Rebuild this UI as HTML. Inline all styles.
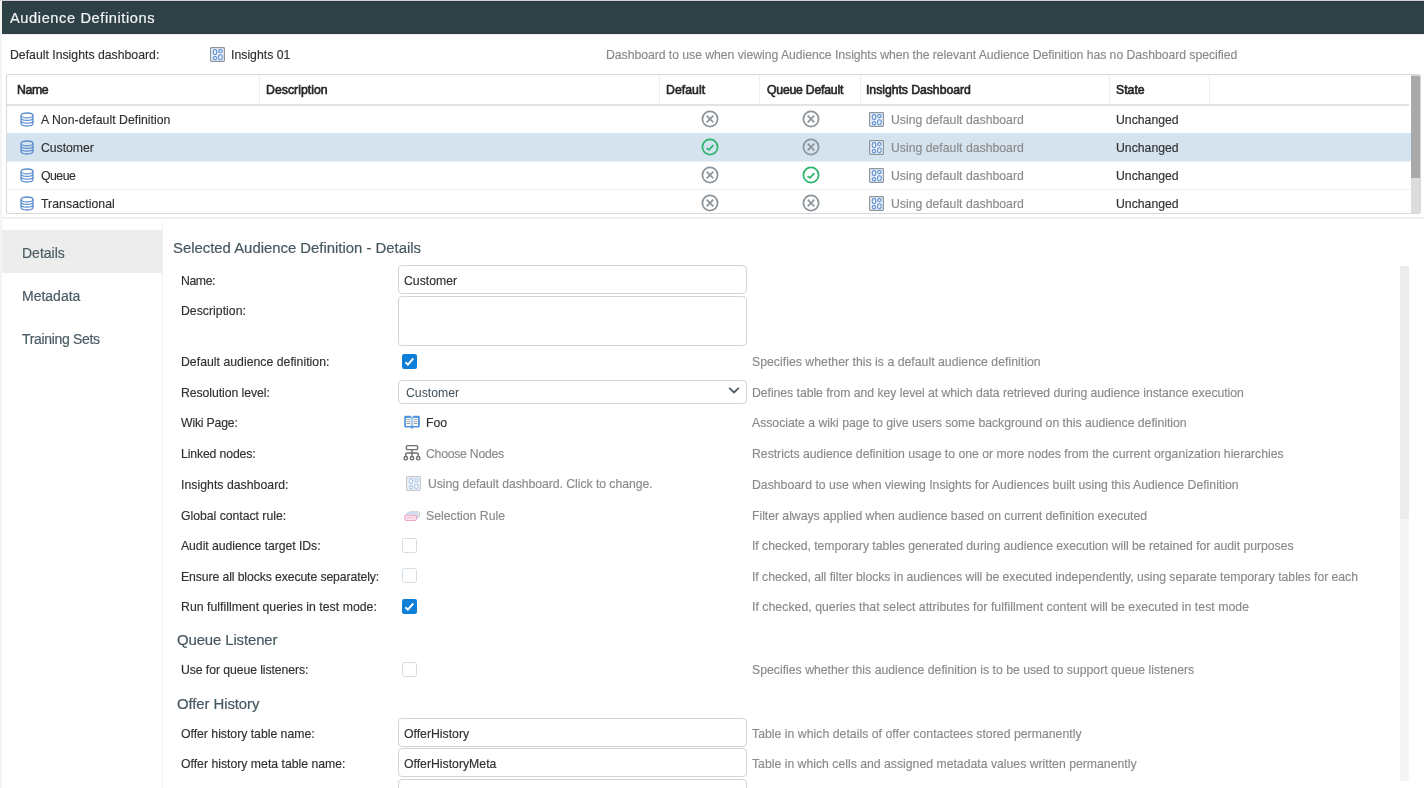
<!DOCTYPE html>
<html><head><meta charset="utf-8">
<style>
*{box-sizing:border-box;margin:0;padding:0}
html,body{width:1424px;height:788px;overflow:hidden;background:#f4f4f4;font-family:"Liberation Sans",sans-serif;font-size:12.25px;line-height:14px;color:#333}
.a{position:absolute;white-space:nowrap}
body>div.a:not([style*="background"]){will-change:transform}
.b{color:#262626;-webkit-text-stroke:0.6px #262626}
.g{color:#8a8a8a;-webkit-text-stroke:0.15px #8a8a8a}
.k{color:#303030;-webkit-text-stroke:0.15px #303030}
.nav{color:#4a5b63;font-size:14px;line-height:16px;-webkit-text-stroke:0.2px #4a5b63}
.ttl{color:#46585f;font-size:14.9px;line-height:17px;-webkit-text-stroke:0.2px #46585f}
.inp{position:absolute;left:398px;width:349px;border:1px solid #d4d4d4;border-radius:4px;background:#fff}
.cb{position:absolute;left:402px;width:15px;height:15px;border:1px solid #d3dde6;border-radius:2.5px;background:#fff}
</style></head><body>
<div class="a" style="left:2px;top:1px;width:1422px;height:787px;background:#fff"></div>
<div class="a" style="left:0;top:0;width:1424px;height:1px;background:#cfd3d5"></div>
<div class="a" style="left:2px;top:1px;width:1422px;height:33px;background:#2e4147;border-top:1px solid #2a3c42;border-bottom:1px solid #2a3c42"></div>
<div class="a" style="left:2px;top:34px;width:1422px;height:1px;background:#eef0f1"></div>
<div id="t1" class="a " style="left:10px;top:10px;letter-spacing:0.608px;color:#f2f4f5;font-size:14.6px;line-height:17px;-webkit-text-stroke:0.2px #f2f4f5">Audience Definitions</div>
<div id="t2" class="a k" style="left:10px;top:48px;letter-spacing:0.006px;">Default Insights dashboard:</div>
<svg class="a" style="left:210px;top:47px;" width="15" height="15" viewBox="0 0 15 15"><rect x="0.6" y="0.6" width="13.8" height="13.8" rx="0.8" fill="#eef3fa" stroke="#8c959c" stroke-width="1.2"/><g fill="none" stroke="#6a98d4" stroke-width="1.25"><rect x="3.3" y="2.5" width="3.4" height="5" rx="1.4"/><rect x="8.6" y="2.5" width="3.6" height="3" rx="1.4"/><rect x="3.3" y="9.6" width="3.4" height="2.9" rx="1.3"/><rect x="8.6" y="7.8" width="3.6" height="4.7" rx="1.4"/></g></svg>
<div id="t3" class="a k" style="left:231px;top:48px;letter-spacing:0.015px;">Insights 01</div>
<div id="t4" class="a g" style="left:606px;top:48px;letter-spacing:-0.049px;">Dashboard to use when viewing Audience Insights when the relevant Audience Definition has no Dashboard specified</div>
<div class="a" style="left:6px;top:74px;width:1415px;height:140px;border:1px solid #d9d9d9;border-radius:2px;background:#fff"></div>
<div class="a" style="left:259px;top:75px;width:1px;height:29px;background:#eeeeee"></div>
<div class="a" style="left:659px;top:75px;width:1px;height:29px;background:#eeeeee"></div>
<div class="a" style="left:759px;top:75px;width:1px;height:29px;background:#eeeeee"></div>
<div class="a" style="left:860px;top:75px;width:1px;height:29px;background:#eeeeee"></div>
<div class="a" style="left:1109px;top:75px;width:1px;height:29px;background:#eeeeee"></div>
<div class="a" style="left:1209px;top:75px;width:1px;height:29px;background:#eeeeee"></div>
<div class="a" style="left:7px;top:104px;width:1402px;height:2px;background:#e3e3e3"></div>
<div id="t5" class="a b" style="left:17px;top:83px;letter-spacing:-0.362px;">Name</div>
<div id="t6" class="a b" style="left:266px;top:83px;letter-spacing:0.032px;">Description</div>
<div id="t7" class="a b" style="left:666px;top:83px;letter-spacing:0.045px;">Default</div>
<div id="t8" class="a b" style="left:767px;top:83px;letter-spacing:-0.225px;">Queue Default</div>
<div id="t9" class="a b" style="left:866px;top:83px;letter-spacing:-0.045px;">Insights Dashboard</div>
<div id="t10" class="a b" style="left:1116px;top:83px;">State</div>
<svg class="a" style="left:20px;top:112px" width="14" height="15" viewBox="0 0 14 15"><g fill="none" stroke="#5c8ecf" stroke-width="1.3"><ellipse cx="7" cy="3.4" rx="6" ry="2.4"/><path d="M1 3.4V11.6A6 2.4 0 0 0 13 11.6V3.4M1 5.9A6 2.4 0 0 0 13 5.9M1 8.7A6 2.4 0 0 0 13 8.7"/></g></svg>
<div id="t11" class="a k" style="left:41px;top:113px;letter-spacing:0.030px;">A Non-default Definition</div>
<svg class="a" style="left:701px;top:110.3px" width="18" height="18" viewBox="0 0 18 18"><g fill="none" stroke="#8d959b" stroke-width="1.75"><circle cx="9" cy="9" r="7.6"/><path d="M5.7 5.7L12.3 12.3M12.3 5.7L5.7 12.3"/></g></svg>
<svg class="a" style="left:802px;top:110.3px" width="18" height="18" viewBox="0 0 18 18"><g fill="none" stroke="#8d959b" stroke-width="1.75"><circle cx="9" cy="9" r="7.6"/><path d="M5.7 5.7L12.3 12.3M12.3 5.7L5.7 12.3"/></g></svg>
<svg class="a" style="left:869px;top:112px;" width="15" height="15" viewBox="0 0 15 15"><rect x="0.6" y="0.6" width="13.8" height="13.8" rx="0.8" fill="#eef3fa" stroke="#8c959c" stroke-width="1.2"/><g fill="none" stroke="#6a98d4" stroke-width="1.25"><rect x="3.3" y="2.5" width="3.4" height="5" rx="1.4"/><rect x="8.6" y="2.5" width="3.6" height="3" rx="1.4"/><rect x="3.3" y="9.6" width="3.4" height="2.9" rx="1.3"/><rect x="8.6" y="7.8" width="3.6" height="4.7" rx="1.4"/></g></svg>
<div id="t12" class="a g" style="left:891px;top:113px;">Using default dashboard</div>
<div id="t13" class="a k" style="left:1116px;top:113px;">Unchanged</div>
<div class="a" style="left:7px;top:133px;width:1404px;height:28px;background:#d5e3ef"></div>
<svg class="a" style="left:20px;top:140px" width="14" height="15" viewBox="0 0 14 15"><g fill="none" stroke="#5c8ecf" stroke-width="1.3"><ellipse cx="7" cy="3.4" rx="6" ry="2.4"/><path d="M1 3.4V11.6A6 2.4 0 0 0 13 11.6V3.4M1 5.9A6 2.4 0 0 0 13 5.9M1 8.7A6 2.4 0 0 0 13 8.7"/></g></svg>
<div id="t14" class="a k" style="left:41px;top:141px;letter-spacing:-0.044px;">Customer</div>
<svg class="a" style="left:701px;top:138.3px" width="18" height="18" viewBox="0 0 18 18"><g fill="none" stroke="#2db46c" stroke-width="1.75"><circle cx="9" cy="9" r="7.6"/><path d="M5.6 10.1L8 11.9L12.3 7.1"/></g></svg>
<svg class="a" style="left:802px;top:138.3px" width="18" height="18" viewBox="0 0 18 18"><g fill="none" stroke="#8d959b" stroke-width="1.75"><circle cx="9" cy="9" r="7.6"/><path d="M5.7 5.7L12.3 12.3M12.3 5.7L5.7 12.3"/></g></svg>
<svg class="a" style="left:869px;top:140px;" width="15" height="15" viewBox="0 0 15 15"><rect x="0.6" y="0.6" width="13.8" height="13.8" rx="0.8" fill="#eef3fa" stroke="#8c959c" stroke-width="1.2"/><g fill="none" stroke="#6a98d4" stroke-width="1.25"><rect x="3.3" y="2.5" width="3.4" height="5" rx="1.4"/><rect x="8.6" y="2.5" width="3.6" height="3" rx="1.4"/><rect x="3.3" y="9.6" width="3.4" height="2.9" rx="1.3"/><rect x="8.6" y="7.8" width="3.6" height="4.7" rx="1.4"/></g></svg>
<div id="t15" class="a g" style="left:891px;top:141px;">Using default dashboard</div>
<div id="t16" class="a k" style="left:1116px;top:141px;">Unchanged</div>
<div class="a" style="left:7px;top:161px;width:1404px;height:1px;background:#f0f0f0"></div>
<svg class="a" style="left:20px;top:168px" width="14" height="15" viewBox="0 0 14 15"><g fill="none" stroke="#5c8ecf" stroke-width="1.3"><ellipse cx="7" cy="3.4" rx="6" ry="2.4"/><path d="M1 3.4V11.6A6 2.4 0 0 0 13 11.6V3.4M1 5.9A6 2.4 0 0 0 13 5.9M1 8.7A6 2.4 0 0 0 13 8.7"/></g></svg>
<div id="t17" class="a k" style="left:41px;top:169px;letter-spacing:-0.495px;">Queue</div>
<svg class="a" style="left:701px;top:166.3px" width="18" height="18" viewBox="0 0 18 18"><g fill="none" stroke="#8d959b" stroke-width="1.75"><circle cx="9" cy="9" r="7.6"/><path d="M5.7 5.7L12.3 12.3M12.3 5.7L5.7 12.3"/></g></svg>
<svg class="a" style="left:802px;top:166.3px" width="18" height="18" viewBox="0 0 18 18"><g fill="none" stroke="#2db46c" stroke-width="1.75"><circle cx="9" cy="9" r="7.6"/><path d="M5.6 10.1L8 11.9L12.3 7.1"/></g></svg>
<svg class="a" style="left:869px;top:168px;" width="15" height="15" viewBox="0 0 15 15"><rect x="0.6" y="0.6" width="13.8" height="13.8" rx="0.8" fill="#eef3fa" stroke="#8c959c" stroke-width="1.2"/><g fill="none" stroke="#6a98d4" stroke-width="1.25"><rect x="3.3" y="2.5" width="3.4" height="5" rx="1.4"/><rect x="8.6" y="2.5" width="3.6" height="3" rx="1.4"/><rect x="3.3" y="9.6" width="3.4" height="2.9" rx="1.3"/><rect x="8.6" y="7.8" width="3.6" height="4.7" rx="1.4"/></g></svg>
<div id="t18" class="a g" style="left:891px;top:169px;">Using default dashboard</div>
<div id="t19" class="a k" style="left:1116px;top:169px;">Unchanged</div>
<div class="a" style="left:7px;top:189px;width:1404px;height:1px;background:#f0f0f0"></div>
<svg class="a" style="left:20px;top:196px" width="14" height="15" viewBox="0 0 14 15"><g fill="none" stroke="#5c8ecf" stroke-width="1.3"><ellipse cx="7" cy="3.4" rx="6" ry="2.4"/><path d="M1 3.4V11.6A6 2.4 0 0 0 13 11.6V3.4M1 5.9A6 2.4 0 0 0 13 5.9M1 8.7A6 2.4 0 0 0 13 8.7"/></g></svg>
<div id="t20" class="a k" style="left:41px;top:197px;letter-spacing:0.059px;">Transactional</div>
<svg class="a" style="left:701px;top:194.3px" width="18" height="18" viewBox="0 0 18 18"><g fill="none" stroke="#8d959b" stroke-width="1.75"><circle cx="9" cy="9" r="7.6"/><path d="M5.7 5.7L12.3 12.3M12.3 5.7L5.7 12.3"/></g></svg>
<svg class="a" style="left:802px;top:194.3px" width="18" height="18" viewBox="0 0 18 18"><g fill="none" stroke="#8d959b" stroke-width="1.75"><circle cx="9" cy="9" r="7.6"/><path d="M5.7 5.7L12.3 12.3M12.3 5.7L5.7 12.3"/></g></svg>
<svg class="a" style="left:869px;top:196px;" width="15" height="15" viewBox="0 0 15 15"><rect x="0.6" y="0.6" width="13.8" height="13.8" rx="0.8" fill="#eef3fa" stroke="#8c959c" stroke-width="1.2"/><g fill="none" stroke="#6a98d4" stroke-width="1.25"><rect x="3.3" y="2.5" width="3.4" height="5" rx="1.4"/><rect x="8.6" y="2.5" width="3.6" height="3" rx="1.4"/><rect x="3.3" y="9.6" width="3.4" height="2.9" rx="1.3"/><rect x="8.6" y="7.8" width="3.6" height="4.7" rx="1.4"/></g></svg>
<div id="t21" class="a g" style="left:891px;top:197px;">Using default dashboard</div>
<div id="t22" class="a k" style="left:1116px;top:197px;">Unchanged</div>
<div class="a" style="left:1411px;top:75px;width:9px;height:138px;background:#dcdcdc"></div>
<div class="a" style="left:1411px;top:76px;width:9px;height:102px;background:#a9a9a9"></div>
<div class="a" style="left:2px;top:217px;width:1422px;height:2px;background:#f0f0f0"></div>
<div class="a" style="left:2px;top:230px;width:160px;height:43px;background:#ededed"></div>
<div class="a" style="left:162px;top:222px;width:1px;height:566px;background:#f0f0f0"></div>
<div id="t23" class="a nav" style="left:22px;top:245px;">Details</div>
<div id="t24" class="a nav" style="left:22px;top:288px;">Metadata</div>
<div id="t25" class="a nav" style="left:22px;top:331px;letter-spacing:-0.322px;">Training Sets</div>
<div id="t26" class="a ttl" style="left:173px;top:240px;letter-spacing:-0.009px;">Selected Audience Definition - Details</div>
<div class="a" style="left:1400px;top:266px;width:9px;height:515px;background:#f5f5f5"></div>
<div class="a" style="left:1400px;top:266px;width:9px;height:253px;background:#ececec"></div>
<div id="t27" class="a k" style="left:181px;top:274px;letter-spacing:-0.398px;">Name:</div>
<div id="t28" class="a k" style="left:181px;top:304px;letter-spacing:0.019px;">Description:</div>
<div id="t29" class="a k" style="left:181px;top:355px;letter-spacing:0.022px;">Default audience definition:</div>
<div id="t30" class="a k" style="left:181px;top:386px;letter-spacing:-0.068px;">Resolution level:</div>
<div id="t31" class="a k" style="left:181px;top:416px;letter-spacing:-0.183px;">Wiki Page:</div>
<div id="t32" class="a k" style="left:181px;top:447px;letter-spacing:-0.133px;">Linked nodes:</div>
<div id="t33" class="a k" style="left:181px;top:478px;letter-spacing:0.032px;">Insights dashboard:</div>
<div id="t34" class="a k" style="left:181px;top:509px;letter-spacing:-0.024px;">Global contact rule:</div>
<div id="t35" class="a k" style="left:181px;top:539px;letter-spacing:-0.055px;">Audit audience target IDs:</div>
<div id="t36" class="a k" style="left:181px;top:570px;letter-spacing:-0.112px;">Ensure all blocks execute separately:</div>
<div id="t37" class="a k" style="left:181px;top:600px;letter-spacing:0.030px;">Run fulfillment queries in test mode:</div>
<div id="t38" class="a k" style="left:181px;top:663px;letter-spacing:-0.082px;">Use for queue listeners:</div>
<div id="t39" class="a k" style="left:181px;top:727px;letter-spacing:-0.013px;">Offer history table name:</div>
<div id="t40" class="a k" style="left:181px;top:757px;letter-spacing:-0.002px;">Offer history meta table name:</div>
<div id="t41" class="a g" style="left:752px;top:355px;letter-spacing:0.023px;">Specifies whether this is a default audience definition</div>
<div id="t42" class="a g" style="left:752px;top:386px;letter-spacing:-0.051px;">Defines table from and key level at which data retrieved during audience instance execution</div>
<div id="t43" class="a g" style="left:752px;top:416px;letter-spacing:-0.024px;">Associate a wiki page to give users some background on this audience definition</div>
<div id="t44" class="a g" style="left:752px;top:447px;letter-spacing:-0.016px;">Restricts audience definition usage to one or more nodes from the current organization hierarchies</div>
<div id="t45" class="a g" style="left:752px;top:478px;letter-spacing:0.005px;">Dashboard to use when viewing Insights for Audiences built using this Audience Definition</div>
<div id="t46" class="a g" style="left:752px;top:509px;letter-spacing:-0.037px;">Filter always applied when audience based on current definition executed</div>
<div id="t47" class="a g" style="left:752px;top:539px;letter-spacing:-0.039px;">If checked, temporary tables generated during audience execution will be retained for audit purposes</div>
<div id="t48" class="a g" style="left:752px;top:570px;letter-spacing:-0.040px;">If checked, all filter blocks in audiences will be executed independently, using separate temporary tables for each</div>
<div id="t49" class="a g" style="left:752px;top:600px;letter-spacing:0.042px;">If checked, queries that select attributes for fulfillment content will be executed in test mode</div>
<div id="t50" class="a g" style="left:752px;top:663px;letter-spacing:0.003px;">Specifies whether this audience definition is to be used to support queue listeners</div>
<div id="t51" class="a g" style="left:752px;top:727px;letter-spacing:0.027px;">Table in which details of offer contactees stored permanently</div>
<div id="t52" class="a g" style="left:752px;top:757px;letter-spacing:-0.003px;">Table in which cells and assigned metadata values written permanently</div>
<div class="inp" style="top:265px;height:29px"></div>
<div id="t53" class="a k" style="left:404px;top:274px;">Customer</div>
<div class="inp" style="top:296px;height:50px"></div>
<div class="inp" style="top:380px;height:24px"></div>
<div id="t54" class="a " style="left:406px;top:386px;color:#3f4f5a">Customer</div>
<svg class="a" style="left:728px;top:386px" width="12" height="9" viewBox="0 0 12 9"><path d="M1.2 1.8L6 6.4L10.8 1.8" fill="none" stroke="#4b5a65" stroke-width="1.8"/></svg>
<svg class="a" style="left:402px;top:354px" width="15" height="15" viewBox="0 0 15 15"><rect x="0" y="0" width="15" height="15" rx="2.2" fill="#0d7fd6"/><path d="M3.4 8.2L5.9 10.6L11.3 4.5" fill="none" stroke="#fff" stroke-width="1.9"/></svg>
<div class="cb" style="top:538px"></div>
<div class="cb" style="top:568px"></div>
<svg class="a" style="left:402px;top:599px" width="15" height="15" viewBox="0 0 15 15"><rect x="0" y="0" width="15" height="15" rx="2.2" fill="#0d7fd6"/><path d="M3.4 8.2L5.9 10.6L11.3 4.5" fill="none" stroke="#fff" stroke-width="1.9"/></svg>
<div class="cb" style="top:662px"></div>
<svg class="a" style="left:404px;top:415px" width="16" height="15" viewBox="0 0 16 15"><path d="M1.3 0.8H6.4L8 2.2L9.6 0.8H14.7Q15.8 0.8 15.8 1.9V11.4Q15.8 12.5 14.7 12.5H9.3L8 13.9L6.7 12.5H1.3Q0.2 12.5 0.2 11.4V1.9Q0.2 0.8 1.3 0.8Z" fill="#4f94da"/><rect x="1.9" y="2.9" width="5" height="8.1" fill="#fff"/><rect x="9.1" y="2.9" width="4.9" height="8.1" fill="#fff"/><rect x="6.9" y="2.4" width="2.2" height="8.6" fill="#a8caed"/><g stroke="#a3a7ab" stroke-width="1"><path d="M2.5 4.4H6.2M2.5 6.4H6.2M9.8 4.4H13.4M9.8 6.4H13.4"/></g><path d="M2.5 8.4H6.2M9.8 8.4H13.4" stroke="#8d9196" stroke-width="1"/></svg>
<div id="t55" class="a k" style="left:426px;top:416px;">Foo</div>
<svg class="a" style="left:403px;top:444px" width="18" height="18" viewBox="0 0 18 18"><g fill="none" stroke="#6e6e6e" stroke-width="1.4"><rect x="3.4" y="1.6" width="11.2" height="4" rx="1"/><path d="M9 5.6V13M2.7 12.4V10.6Q2.7 9 4.3 9H13.7Q15.3 9 15.3 10.6V12.4"/><circle cx="2.8" cy="14.2" r="1.7"/><circle cx="9" cy="14.2" r="1.7"/><circle cx="15.2" cy="14.2" r="1.7"/></g></svg>
<div id="t56" class="a g" style="left:426px;top:447px;letter-spacing:-0.259px;">Choose Nodes</div>
<svg class="a" style="left:406px;top:476px;opacity:0.5" width="15" height="15" viewBox="0 0 15 15"><rect x="0.6" y="0.6" width="13.8" height="13.8" rx="0.8" fill="#eef3fa" stroke="#8c959c" stroke-width="1.2"/><g fill="none" stroke="#6a98d4" stroke-width="1.25"><rect x="3.3" y="2.5" width="3.4" height="5" rx="1.4"/><rect x="8.6" y="2.5" width="3.6" height="3" rx="1.4"/><rect x="3.3" y="9.6" width="3.4" height="2.9" rx="1.3"/><rect x="8.6" y="7.8" width="3.6" height="4.7" rx="1.4"/></g></svg>
<div id="t57" class="a g" style="left:428px;top:477px;letter-spacing:-0.054px;">Using default dashboard. Click to change.</div>
<svg class="a" style="left:403px;top:510.7px" width="18" height="12" viewBox="0 0 18 12"><rect x="5.5" y="0.8" width="11" height="5.5" rx="1.3" fill="#f3f3f3" stroke="#c8c8c8" stroke-width="1"/><rect x="3.5" y="2" width="11" height="6" rx="1.3" fill="#e4eef9" stroke="#b5d3ef" stroke-width="1"/><rect x="1.8" y="4.2" width="11.6" height="5.3" rx="1.4" fill="#fbe7ef" stroke="#eea7c3" stroke-width="1.2"/><path d="M3.6 6.9H11.6" stroke="#eea7c3" stroke-width="0.9" stroke-dasharray="2.2 0.5"/></svg>
<div id="t58" class="a g" style="left:426px;top:509px;">Selection Rule</div>
<div id="t59" class="a ttl" style="left:177px;top:632px;letter-spacing:-0.102px;">Queue Listener</div>
<div id="t60" class="a ttl" style="left:177px;top:696px;letter-spacing:-0.075px;">Offer History</div>
<div class="inp" style="top:718px;height:29px"></div>
<div id="t61" class="a k" style="left:404px;top:727px;">OfferHistory</div>
<div class="inp" style="top:748px;height:29px"></div>
<div id="t62" class="a k" style="left:404px;top:757px;">OfferHistoryMeta</div>
<div class="inp" style="top:779px;height:29px"></div>
</body></html>
